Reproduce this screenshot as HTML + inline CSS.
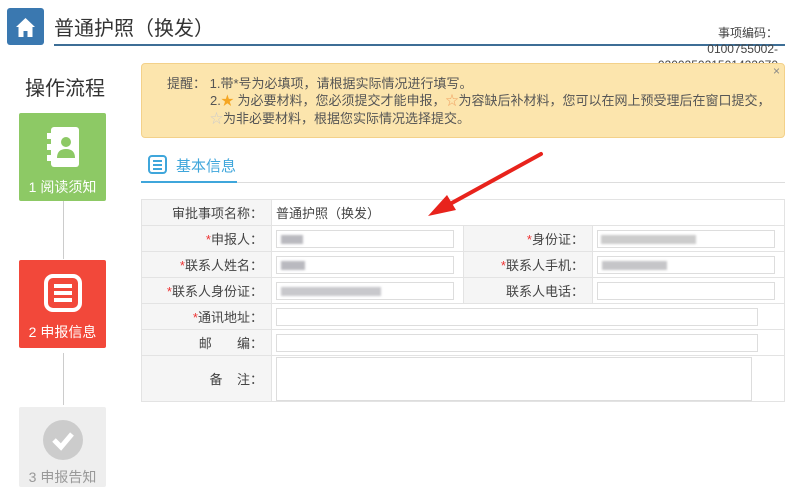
<!DOCTYPE html>
<html><head><meta charset="utf-8"><style>
*{margin:0;padding:0;box-sizing:border-box}
body{width:792px;height:481px;overflow:hidden;background:#fff;font-family:"Liberation Sans","Noto Sans CJK SC",sans-serif;position:relative;color:#333}
.a{position:absolute;white-space:nowrap}
.step{position:absolute;left:19px;width:87px;border-radius:2px;color:#fff;font-size:14px;text-align:center}
.vl{position:absolute;left:63px;width:1px;background:#ccc}
table{position:absolute;left:141px;top:199px;width:644px;border-collapse:collapse;font-size:13px;color:#444}
td{border:1px solid #e3e3e3;height:26px;padding:0 4px}
td.l{background:#f5f5f5;text-align:right;padding-right:8px}
.r{color:#e33}
.in{display:block;height:18px;border:1px solid #ddd;background:#fff;position:relative}
.bl{position:absolute;top:4px;height:9px;background:#b9b9bf;filter:blur(1px)}
</style></head><body>
<div class="a" style="left:7px;top:8px;width:37px;height:37px;background:#3a78b0;border-radius:3px">
<svg width="37" height="37" viewBox="0 0 37 37"><path d="M9 19 L18.5 10 L28 19 L25.5 19 L25.5 29 L20.5 29 L20.5 23 L16.5 23 L16.5 29 L11.5 29 L11.5 19 Z" fill="#fff"/></svg></div>
<div class="a" style="left:54px;top:12px;font-size:20px;color:#333">普通护照（换发）</div>
<div class="a" style="left:54px;top:44px;width:731px;height:2px;background:#3d6e96"></div>
<div class="a" style="right:14px;top:25px;font-size:12px;color:#444;text-align:right;line-height:16px">事项编码：<br>0100755002-<br>020025021501422070</div>
<div class="a" style="left:25px;top:72px;font-size:20px;color:#333">操作流程</div>
<div class="step" style="top:113px;height:88px;background:#8dc965">
<svg width="40" height="46" viewBox="0 0 40 46" style="margin-top:12px"><rect x="8" y="2" width="28" height="40" rx="3" fill="#fff"/><rect x="4" y="8" width="4" height="6" fill="#fff"/><rect x="4" y="19" width="4" height="6" fill="#fff"/><rect x="4" y="30" width="4" height="6" fill="#fff"/><circle cx="23" cy="17" r="5" fill="#8dc965"/><path d="M14 33 Q14 24 23 24 Q32 24 32 33 Z" fill="#8dc965"/></svg>
<div style="margin-top:3px">1 阅读须知</div></div>
<div class="vl" style="top:201px;height:58px"></div>
<div class="step" style="top:260px;height:88px;background:#f2483a">
<svg width="40" height="40" viewBox="0 0 40 40" style="margin-top:13px"><rect x="3" y="3" width="34" height="34" rx="7" fill="none" stroke="#fff" stroke-width="4"/><rect x="11" y="11" width="18" height="4" fill="#fff"/><rect x="11" y="18" width="18" height="4" fill="#fff"/><rect x="11" y="25" width="18" height="4" fill="#fff"/></svg>
<div style="margin-top:6px">2 申报信息</div></div>
<div class="vl" style="top:353px;height:52px"></div>
<div class="step" style="top:407px;height:80px;background:#eee;color:#999">
<svg width="40" height="40" viewBox="0 0 40 40" style="margin-top:13px"><circle cx="20" cy="20" r="20" fill="#ccc"/><path d="M11 20 L18 27 L29 14" fill="none" stroke="#fff" stroke-width="5"/></svg>
<div style="margin-top:4px">3 申报告知</div></div>
<div class="a" style="left:141px;top:63px;width:644px;height:75px;background:#fce5ad;border:1px solid #f3d18a;border-radius:4px"></div>
<div class="a" style="left:773px;top:64px;font-size:12px;color:#888">×</div>
<div class="a" style="left:167px;top:75px;font-size:13px;color:#555;line-height:17.5px">提醒：&nbsp;1.带*号为必填项，请根据实际情况进行填写。</div>
<div class="a" style="left:210px;top:92px;font-size:13px;color:#555;line-height:17.5px">2.<span style="color:#f5a623">★</span> 为必要材料，您必须提交才能申报，<span style="color:#f0a060">☆</span>为容缺后补材料，您可以在网上预受理后在窗口提交，<br><span style="color:#ccc">☆</span>为非必要材料，根据您实际情况选择提交。</div>
<div class="a" style="left:148px;top:155px;width:19px;height:19px;border:2.5px solid #3fa6db;border-radius:4px">
<div style="margin:3px 3px 0;height:2px;background:#3fa6db"></div><div style="margin:2px 3px 0;height:2px;background:#3fa6db"></div><div style="margin:2px 3px 0;height:2px;background:#3fa6db"></div></div>
<div class="a" style="left:176px;top:155px;font-size:15px;color:#3fa6db">基本信息</div>
<div class="a" style="left:141px;top:182px;width:644px;height:1px;background:#ddd"></div>
<div class="a" style="left:141px;top:181px;width:96px;height:2px;background:#3fa6db"></div>
<table>
<tr><td class="l" style="width:130px">审批事项名称：</td><td colspan="3" style="padding-left:4px">普通护照（换发）</td></tr>
<tr><td class="l"><span class="r">*</span>申报人：</td><td style="width:192px"><div class="in" style="width:178px"><div class="bl" style="left:4px;width:22px"></div></div></td><td class="l" style="width:129px"><span class="r">*</span>身份证：</td><td><div class="in" style="width:178px"><div class="bl" style="left:3px;width:95px;background:#ccc"></div></div></td></tr>
<tr><td class="l"><span class="r">*</span>联系人姓名：</td><td><div class="in" style="width:178px"><div class="bl" style="left:4px;width:24px"></div></div></td><td class="l"><span class="r">*</span>联系人手机：</td><td><div class="in" style="width:178px"><div class="bl" style="left:4px;width:65px;background:#c5c5c8"></div></div></td></tr>
<tr><td class="l"><span class="r">*</span>联系人身份证：</td><td><div class="in" style="width:178px"><div class="bl" style="left:4px;width:100px;background:#c8c8cc"></div></div></td><td class="l">联系人电话：</td><td><div class="in" style="width:178px"></div></td></tr>
<tr><td class="l"><span class="r">*</span>通讯地址：</td><td colspan="3"><div class="in" style="width:482px"></div></td></tr>
<tr><td class="l">邮&nbsp;&nbsp;&nbsp;&nbsp;&nbsp;&nbsp;&nbsp;编：</td><td colspan="3"><div class="in" style="width:482px"></div></td></tr>
<tr><td class="l" style="height:46px">备&nbsp;&nbsp;&nbsp;&nbsp;注：</td><td colspan="3"><div class="in" style="width:476px;height:44px;margin-top:0"></div></td></tr>
</table>
<svg class="a" style="left:0;top:0" width="792" height="481"><path d="M541 154 L450 204" stroke="#e8231c" stroke-width="4" stroke-linecap="round"/><path d="M428 216 L447 195 L456 210 Z" fill="#e8231c"/></svg>
</body></html>
